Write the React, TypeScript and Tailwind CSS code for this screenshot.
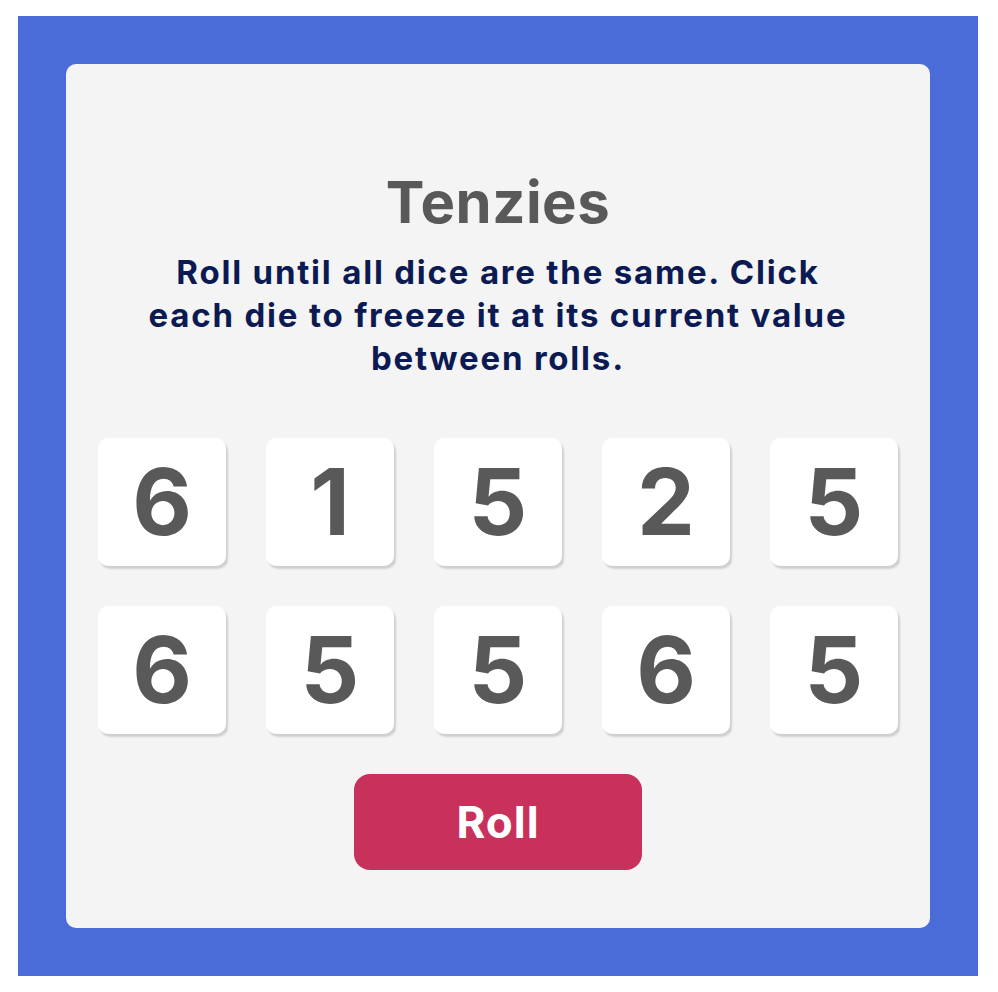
import React from "react";

const dice = [6, 1, 5, 2, 5, 6, 5, 5, 6, 5];

export default function App() {
  return (
    <div className="w-[998px] h-[992px] bg-white pt-4 pl-[18px]" style={{ fontFamily: "Inter, 'Liberation Sans', sans-serif" }}>
      <div className="w-[960px] h-[960px] bg-[#4a6cd9] p-12">
        <div className="w-[864px] h-[864px] bg-[#f4f4f4] rounded-[10px] flex flex-col items-center pt-[110px]">
          <h1 className="text-[58px] leading-[56px] font-bold text-[#595959] m-0 tracking-[0.5px]">Tenzies</h1>
          <p className="mt-[21px] w-[720px] text-center text-[33px] leading-[43px] font-bold text-[#0b1a52] tracking-[1.8px]">
            Roll until all dice are the same. Click each die to freeze it at its current value between rolls.
          </p>
          <div className="mt-[58px] grid grid-cols-5 gap-10">
            {dice.map((d, i) => (
              <button
                key={i}
                className="w-32 h-32 bg-white rounded-[10px] shadow-[2px_3px_2px_rgba(0,0,0,0.15)] flex items-center justify-center text-[92px] font-bold text-[#595959] leading-none"
              >
                {d}
              </button>
            ))}
          </div>
          <button className="mt-10 w-[288px] h-24 rounded-2xl bg-[#c9315d] text-white text-[44px] font-bold tracking-[1px]">
            Roll
          </button>
        </div>
      </div>
    </div>
  );
}
